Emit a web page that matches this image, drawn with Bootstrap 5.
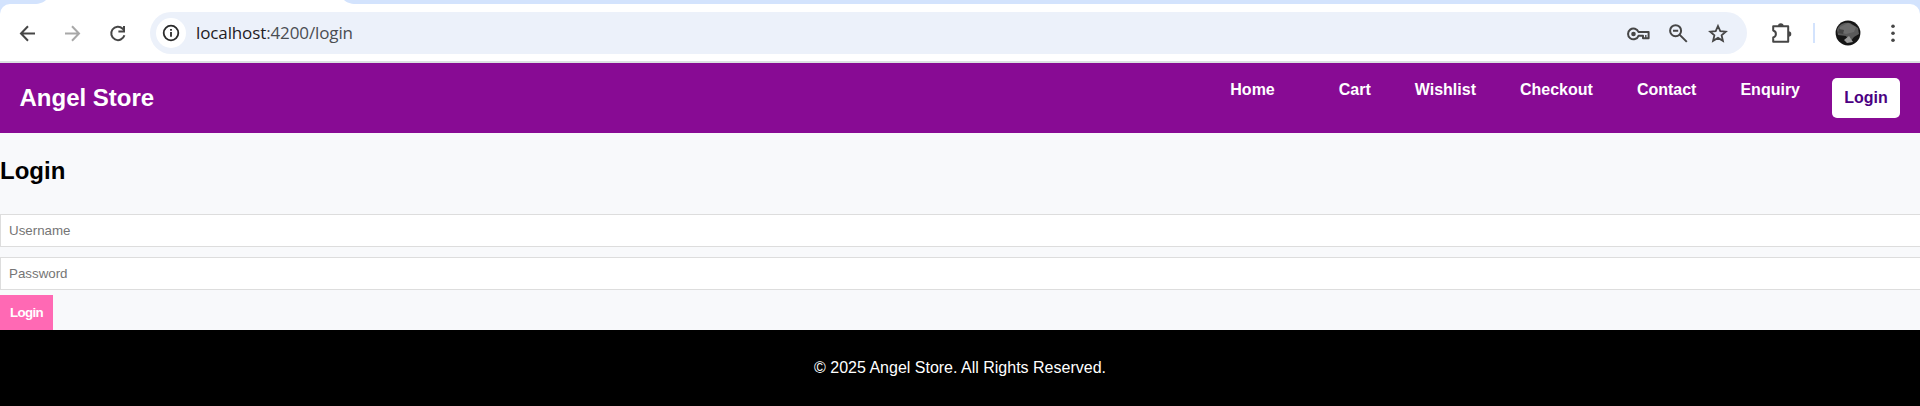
<!DOCTYPE html>
<html lang="en">
<head>
<meta charset="utf-8">
<meta name="viewport" content="width=device-width, initial-scale=1">
<title>Angel Store</title>
<link href="https://cdn.jsdelivr.net/npm/bootstrap@5.3.0/dist/css/bootstrap.min.css" rel="stylesheet">
<style>
body{font-family:"Liberation Sans",Arial,sans-serif;font-size:16px;line-height:18px;background:#f8f9fb;color:#000;overflow:hidden;height:406px}
svg{display:block;flex:none}
.tab-strip{height:4px;background:#d3e3fd}
.tool-wrap{background:#d3e3fd}
.tool-bar{height:57px;background:#fff;border-radius:10px 10px 0 0;padding:0 15px 0 15px}
.tool-line{height:2px;background:#dde1e2}
.address{height:42px;margin-left:20px;width:1597px;background:#ecf1fa;border-radius:21px;padding:0 17px 0 6px}
.info-dot{width:30px;height:30px;background:#fff}
.url{font-family:"Open Sans",sans-serif;font-size:17px;line-height:24px;letter-spacing:-.12px;color:#4a4d52;margin:1px 0 0 10px}
.url b{font-weight:400;color:#1f2023}
.divide{width:2px;height:20px;background:#d3e3fd}
.store-nav{height:70px;background:#880b94;padding:15px 20px}
.brand{font-size:24px;line-height:28px;font-weight:700;margin-left:-.5px}
.links{font-weight:700;gap:44px;padding-top:3px}
.links a:first-child{margin-right:20px}
.login-link{width:68px;height:40px;margin-left:32px;background:#fff;border-radius:5px;color:#4b0082;font-weight:700}
h2.title{font-size:24px;line-height:28px;font-weight:700;margin:24px 0 29px}
.field{width:calc(100% + 18px);height:33px;border:1px solid #ddd;border-radius:0;padding:0 8px;font-size:13.333px;line-height:15px;margin-bottom:10px}
.field::placeholder{color:#757575;opacity:1}
.send{width:53px;height:35px;margin-top:-5px;background:#ff69b4;border-radius:0;color:#fff;font-size:13.333px;line-height:15px;letter-spacing:-.7px;font-weight:700}
.foot{height:76px;background:#000}
</style>
</head>
<body>
<div class="tab-strip"><svg width="400" height="4"><path d="M34 4C40 4 44 2 46 0H344C346 2 350 4 356 4Z" fill="#fff"/></svg></div>
<div class="tool-wrap">
<div class="tool-bar d-flex align-items-center">
  <svg width="24" height="24" viewBox="0 0 24 24" fill="none" stroke="#464646" stroke-width="2"><path d="M20 12.5H6.5M13 5.3L6 12.5L13 19.7"/></svg>
  <svg style="margin-left:21px" width="24" height="24" viewBox="0 0 24 24" fill="none" stroke="#a8a8a8" stroke-width="2"><path d="M5 12.5H18.5M12 5.3L19 12.5L12 19.7"/></svg>
  <svg style="margin-left:22px" width="24" height="24" viewBox="0 0 24 24" fill="none" stroke="#464646" stroke-width="2"><path d="M18.4 14.2A6.7 6.7 0 1 1 16.7 7.7L18 9.3"/><path d="M18 5V10.4H12.4"/></svg>
  <div class="address d-flex align-items-center">
    <div class="info-dot rounded-circle d-flex align-items-center justify-content-center">
      <svg width="18" height="18" viewBox="0 0 18 18"><circle cx="9" cy="9" r="7.3" fill="none" stroke="#2b2b2b" stroke-width="1.8"/><path d="M8.1 8H9.9V12.8H8.1ZM8.1 5H9.9V6.8H8.1Z" fill="#2b2b2b"/></svg>
    </div>
    <div class="url"><b>localhost</b>:4200/login</div>
    <div class="d-flex align-items-center ms-auto">
      <svg width="24" height="24" viewBox="0 0 24 24" fill="none" stroke="#464646" stroke-width="2"><path d="M12.5 11H22.6V17.2H17V14.8H12.5A5.4 5.4 0 1 1 12.5 11Z" stroke-linejoin="round"/><path d="M19.8 14V17" stroke-width="1.4"/><circle cx="7.5" cy="13" r="2.3" fill="#464646" stroke="none"/></svg>
      <svg style="margin-left:16px" width="24" height="24" viewBox="0 0 24 24" fill="none" stroke="#464646" stroke-width="2"><circle cx="9.6" cy="9.7" r="5.5"/><path d="M13.5 13.6L20.8 20.9M7 9.7H12.2"/></svg>
      <svg style="margin-left:16px" width="24" height="24" viewBox="0 0 24 24" fill="none" stroke="#464646" stroke-width="1.8"><path d="M12 5L14.3 10.1L19.8 10.6L15.6 14.3L16.9 19.8L12 16.9L7.1 19.8L8.4 14.3L4.2 10.6L9.7 10.1Z"/></svg>
    </div>
  </div>
  <svg style="margin-left:22px" width="24" height="24" viewBox="0 0 24 24" fill="none" stroke="#464646" stroke-width="2"><path d="M4.2 5.3H19.2V20.7H4.2V16.5C7.8 15.5 7.8 10.5 4.2 9.5Z" stroke-linejoin="round"/><path d="M9 5A2.8 2.8 0 0 1 14.6 5ZM19.5 10.2A2.8 2.8 0 0 1 19.5 15.8Z" fill="#464646" stroke="none"/></svg>
  <div class="divide" style="margin-left:20px"></div>
  <svg style="margin-left:20px" width="26" height="26" viewBox="0 0 26 26"><circle cx="13" cy="13" r="12.4" fill="#151515"/><path d="M2 10C4 4 9 2 15 3L23 8L24 14L19 17L15 22L11 16L3 15Z" fill="#5a5a5a"/><path d="M5 7L13 3L21 7L19 12L11 14L5 12Z" fill="#6c6c6c"/><path d="M9 20L14 16L18 22L12 23Z" fill="#999"/><path d="M4 9L9 10L8 14L3 13Z" fill="#444"/></svg>
  <svg style="margin-left:20px" width="24" height="24" viewBox="0 0 24 24" fill="#464646"><circle cx="12" cy="5.2" r="1.8"/><circle cx="12" cy="12.2" r="1.8"/><circle cx="12" cy="19.2" r="1.8"/></svg>
</div>
</div>
<div class="tool-line"></div>
<header class="store-nav d-flex">
  <div class="brand text-white align-self-center">Angel Store</div>
  <nav class="links d-flex ms-auto">
    <a class="text-white text-decoration-none" href="#">Home</a>
    <a class="text-white text-decoration-none" href="#">Cart</a>
    <a class="text-white text-decoration-none" href="#">Wishlist</a>
    <a class="text-white text-decoration-none" href="#">Checkout</a>
    <a class="text-white text-decoration-none" href="#">Contact</a>
    <a class="text-white text-decoration-none" href="#">Enquiry</a>
  </nav>
  <a class="login-link d-flex align-items-center justify-content-center text-decoration-none" href="#">Login</a>
</header>
<main>
  <h2 class="title">Login</h2>
  <form>
    <input class="field d-block" type="text" placeholder="Username">
    <input class="field d-block" type="password" placeholder="Password">
    <button class="send btn p-0 border-0 d-block" type="button">Login</button>
  </form>
</main>
<footer class="foot text-white d-flex align-items-center justify-content-center">© 2025 Angel Store. All Rights Reserved.</footer>
<script src="https://cdn.jsdelivr.net/npm/bootstrap@5.3.0/dist/js/bootstrap.bundle.min.js"></script>
</body>
</html>
